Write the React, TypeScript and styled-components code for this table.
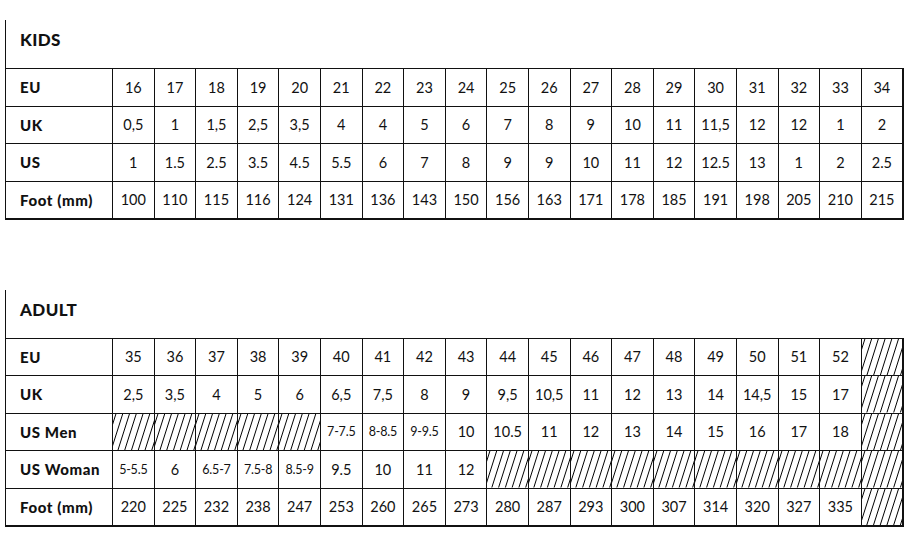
import React from 'react';
import styled, { createGlobalStyle } from 'styled-components';

const GlobalStyle = createGlobalStyle`
  html, body {
    margin: 0;
    padding: 0;
    background: #fff;
  }
  body {
    font-family: Lato, "Noto Sans", Arial, sans-serif;
    color: #111;
  }
`;

type Cell = string | null;

interface SizeRow {
  label: string;
  cells: Cell[];
}

const kidsRows: SizeRow[] = [
  { label: 'EU', cells: ['16', '17', '18', '19', '20', '21', '22', '23', '24', '25', '26', '27', '28', '29', '30', '31', '32', '33', '34'] },
  { label: 'UK', cells: ['0,5', '1', '1,5', '2,5', '3,5', '4', '4', '5', '6', '7', '8', '9', '10', '11', '11,5', '12', '12', '1', '2'] },
  { label: 'US', cells: ['1', '1.5', '2.5', '3.5', '4.5', '5.5', '6', '7', '8', '9', '9', '10', '11', '12', '12.5', '13', '1', '2', '2.5'] },
  { label: 'Foot (mm)', cells: ['100', '110', '115', '116', '124', '131', '136', '143', '150', '156', '163', '171', '178', '185', '191', '198', '205', '210', '215'] },
];

// null = hatched (no size available)
const H = null;

const adultRows: SizeRow[] = [
  { label: 'EU', cells: ['35', '36', '37', '38', '39', '40', '41', '42', '43', '44', '45', '46', '47', '48', '49', '50', '51', '52', H] },
  { label: 'UK', cells: ['2,5', '3,5', '4', '5', '6', '6,5', '7,5', '8', '9', '9,5', '10,5', '11', '12', '13', '14', '14,5', '15', '17', H] },
  { label: 'US Men', cells: [H, H, H, H, H, '7-7.5', '8-8.5', '9-9.5', '10', '10.5', '11', '12', '13', '14', '15', '16', '17', '18', H] },
  { label: 'US Woman', cells: ['5-5.5', '6', '6.5-7', '7.5-8', '8.5-9', '9.5', '10', '11', '12', H, H, H, H, H, H, H, H, H, H] },
  { label: 'Foot (mm)', cells: ['220', '225', '232', '238', '247', '253', '260', '265', '273', '280', '287', '293', '300', '307', '314', '320', '327', '335', H] },
];

const Page = styled.div`
  padding: 20px 9px 0 5px;
  display: flex;
  flex-direction: column;
  gap: 70px;
`;

const Section = styled.section`
  border-left: 1px solid #111;
  width: 899px;
`;

const Title = styled.h2`
  margin: 0;
  height: 48px;
  padding: 9px 0 0 14px;
  box-sizing: border-box;
  font-size: 17px;
  font-weight: 900;
  letter-spacing: 0.4px;
`;

const Table = styled.table`
  width: 899px;
  border-collapse: collapse;
  table-layout: fixed;
  margin-left: -1px;
  border-bottom: 2px solid #111;
  border-right: 2px solid #111;
`;

const LabelCol = styled.col`
  width: 107px;
`;

const Row = styled.tr`
  height: 37.5px;
`;

const LabelCell = styled.th`
  border: 1px solid #111;
  text-align: left;
  padding: 0 0 0 14px;
  font-size: 15px;
  font-weight: 900;
  letter-spacing: 0.6px;
  white-space: nowrap;
`;

const ValueCell = styled.td<{ $small?: boolean }>`
  position: relative;
  border: 1px solid #111;
  padding: 0;
  text-align: center;
  font-size: ${p => (p.$small ? '12.5px' : '14.5px')};
  font-weight: 400;
  white-space: nowrap;
  letter-spacing: ${p => (p.$small ? '-0.2px' : '0')};
`;

const HatchSvg = styled.svg`
  position: absolute;
  inset: 0;
  width: 100%;
  height: 100%;
  display: block;
`;

// diagonal hatching for sizes that do not exist
const Hatch: React.FC = () => (
  <HatchSvg viewBox="0 0 42 38" preserveAspectRatio="none">
    {Array.from({ length: 9 }).map((_, i) => {
      const x = -9 + i * 7;
      return (
        <line
          key={i}
          x1={x}
          y1={38}
          x2={x + 12}
          y2={0}
          stroke="#000"
          strokeWidth={1}
          vectorEffect="non-scaling-stroke"
        />
      );
    })}
  </HatchSvg>
);

const SizeTable: React.FC<{ title: string; rows: SizeRow[] }> = ({ title, rows }) => {
  const count = rows[0].cells.length;
  return (
    <Section>
      <Title>{title}</Title>
      <Table>
        <colgroup>
          <LabelCol />
          {Array.from({ length: count }).map((_, i) => (
            <col key={i} />
          ))}
        </colgroup>
        <tbody>
          {rows.map(row => (
            <Row key={row.label}>
              <LabelCell>{row.label}</LabelCell>
              {row.cells.map((c, i) => (
                <ValueCell key={i} $small={!!c && c.includes('-')}>
                  {c === null ? <Hatch /> : c}
                </ValueCell>
              ))}
            </Row>
          ))}
        </tbody>
      </Table>
    </Section>
  );
};

export default function App() {
  return (
    <>
      <GlobalStyle />
      <Page>
        <SizeTable title="KIDS" rows={kidsRows} />
        <SizeTable title="ADULT" rows={adultRows} />
      </Page>
    </>
  );
}
